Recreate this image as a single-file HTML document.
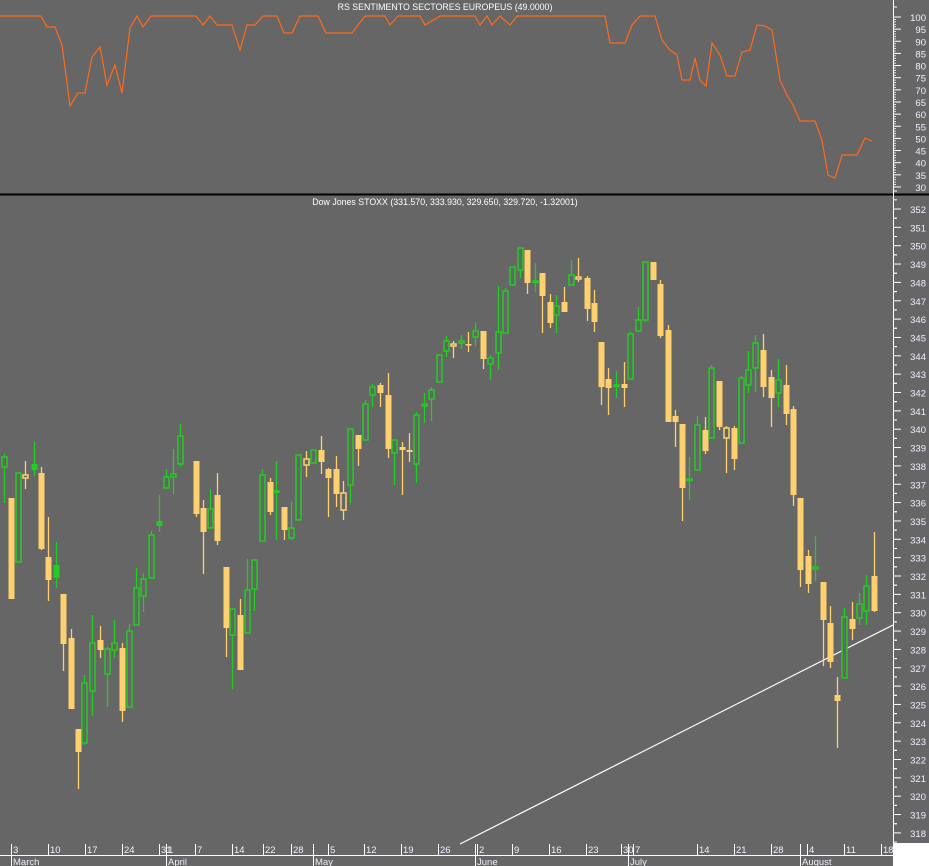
<!DOCTYPE html>
<html><head><meta charset="utf-8"><style>
html,body{margin:0;padding:0;background:#666;}
svg{display:block;font-family:"Liberation Sans",sans-serif;}
</style></head><body>
<svg id="s" width="929" height="866" xmlns="http://www.w3.org/2000/svg">
<rect width="929" height="866" fill="#666666"/>
<rect x="893" y="843" width="36" height="23" fill="#ffffff"/>
<line x1="0" y1="194.5" x2="929" y2="194.5" stroke="#000" stroke-width="2"/>
<line x1="893.5" y1="0" x2="893.5" y2="843" stroke="#fff" stroke-width="1"/>
<text x="445" y="10" font-size="8.8" fill="#fff" text-anchor="middle">RS SENTIMENTO SECTORES EUROPEUS (49.0000)</text>
<text x="445" y="205" font-size="8.8" fill="#fff" text-anchor="middle">Dow Jones STOXX (331.570, 333.930, 329.650, 329.720, -1.32001)</text>
<polyline fill="none" stroke="#ff6a1a" stroke-width="1.2" points="0,16 41,16 47,27 55,27 62,45 70,106 78,93 85,93 92,57 100,47 107,85 115,65 122,93 130,28 137,16 143,27 151,16 196,16 203,25 210,16 217,25 232,25 240,50 247,25 255,25 263,16 277,16 284,33 292,33 300,16 318,16 326,33 352,33 358,25 365,16 385,16 390,25 398,16 420,16 425,25 440,16 475,16 480,25 487,16 492,25 500,16 510,25 517,16 605,16 610,43 625,43 632,25 640,16 655,16 662,40 670,50 677,55 682,80 690,80 695,58 700,80 706,86 712,43 720,55 727,76 735,76 742,52 750,50 757,25 765,26 772,30 780,80 787,95 793,105 800,121 807,121 815,121 822,140 828,175 835,178 842,155 850,155 857,155 865,138 872,141"/>
<line x1="460" y1="844" x2="893" y2="625" stroke="#fff" stroke-width="1.2"/>
<g id="c"></g>
<g id="ax" font-size="9.5" fill="#eef0ff"></g>
<line x1="0" y1="855.5" x2="893" y2="855.5" stroke="#fff"/>
</svg>
<script>
var NS="http://www.w3.org/2000/svg";
function el(t,a,p){var e=document.createElementNS(NS,t);for(var k in a)e.setAttribute(k,a[k]);(p||document.getElementById('c')).appendChild(e);return e;}
var Y="#ffd070",G="#22cc22";
var d=[
[4,454,503,457,467,'G'],[11,498,599,498,599,'Y'],[18,473,562,473,562,'G'],[25,461,489,475,478,'y'],[34,442,476,464,470,'g'],
[41,467,550,473,549,'Y'],[48,517,601,557,580,'Y'],[56,542,588,565,578,'g'],[63,594,671,594,644,'Y'],[71,629,709,638,709,'Y'],
[78,729,789,729,752,'Y'],[84,675,745,683,743,'G'],[92,615,716,643,691,'G'],[100,626,658,640,650,'Y'],[107,647,707,649,674,'G'],
[114,620,658,643,650,'G'],[122,643,722,648,711,'Y'],[129,624,707,631,707,'G'],[136,568,625,588,625,'G'],[143,573,612,579,596,'G'],
[151,531,578,535,578,'G'],[159,495,532,521,526,'g'],[166,469,488,477,488,'G'],[173,449,494,474,477,'G'],[180,424,467,436,464,'G'],
[196,461,517,461,514,'Y'],[203,500,574,508,532,'Y'],[210,489,528,509,528,'G'],[217,473,545,495,541,'Y'],[226,567,657,567,628,'Y'],
[232,609,689,609,635,'G'],[240,599,670,615,670,'Y'],[247,559,633,590,633,'G'],[254,559,611,560,589,'G'],[262,469,541,475,541,'G'],
[270,478,515,482,512,'Y'],[276,461,540,491,492,'G'],[284,507,540,507,530,'Y'],[291,502,540,528,538,'G'],[298,455,520,455,520,'G'],
[306,451,477,459,465,'y'],[313,450,463,450,463,'G'],[321,436,474,450,462,'Y'],[328,468,517,469,478,'Y'],[336,456,507,469,494,'Y'],
[343,481,520,493,510,'y'],[350,429,503,429,485,'G'],[358,435,466,435,449,'Y'],[365,400,440,404,440,'G'],[372,384,407,387,395,'G'],
[380,383,407,385,393,'Y'],[388,373,458,395,449,'Y'],[394,440,485,440,453,'G'],[402,442,495,447,450,'Y'],[409,433,462,450,452,'Y'],
[416,412,483,415,464,'G'],[424,393,423,404,406,'G'],[431,387,421,390,399,'G'],[439,355,382,355,382,'G'],[446,336,357,341,351,'G'],
[453,341,358,344,346,'y'],[461,335,349,341,343,'G'],[468,332,352,344,345,'Y'],[475,322,346,331,337,'G'],[483,331,369,331,359,'Y'],
[490,355,380,358,364,'G'],[498,286,370,332,353,'G'],[505,288,333,291,333,'G'],[512,267,285,267,285,'G'],[520,248,278,248,270,'G'],
[527,250,294,250,283,'Y'],[535,263,292,281,282,'G'],[542,273,333,273,296,'Y'],[550,294,328,302,323,'Y'],[556,295,333,306,315,'G'],
[564,287,312,302,312,'Y'],[571,260,285,275,285,'G'],[578,258,282,277,279,'y'],[587,276,321,278,309,'Y'],[594,290,332,303,322,'Y'],
[601,342,405,342,387,'Y'],[608,368,415,379,388,'Y'],[616,371,398,385,386,'G'],[624,362,407,384,388,'Y'],[630,332,379,334,379,'G'],
[638,307,332,320,331,'G'],[645,262,322,262,320,'G'],[653,262,280,262,280,'Y'],[660,280,338,284,336,'Y'],[668,325,422,330,422,'Y'],
[675,410,447,416,422,'Y'],[682,424,521,424,488,'Y'],[689,457,500,479,480,'G'],[697,416,470,425,470,'G'],[705,417,454,430,451,'Y'],
[711,365,438,368,438,'G'],[719,381,430,381,427,'Y'],[726,426,473,428,438,'y'],[734,426,470,428,459,'Y'],[741,376,443,378,443,'G'],
[748,351,393,370,385,'G'],[755,335,392,343,368,'G'],[763,334,397,350,387,'Y'],[771,370,427,377,398,'Y'],[778,359,407,380,393,'G'],
[786,365,425,385,414,'Y'],[793,406,506,409,495,'Y'],[800,498,587,498,570,'Y'],[808,550,593,556,584,'Y'],[815,536,581,567,569,'G'],
[823,582,666,582,620,'Y'],[830,606,668,623,662,'Y'],[837,677,748,695,701,'Y'],[844,608,678,617,678,'G'],[852,602,640,619,629,'Y'],
[859,593,625,604,618,'G'],[866,575,625,586,611,'G'],[874,532,612,576,611,'Y']];
d.forEach(function(c){var col=(c[5]=='Y'||c[5]=='y')?Y:G;var x=c[0];
el('line',{x1:x+.5,y1:c[1],x2:x+.5,y2:c[2],stroke:col,'stroke-width':1.3});
var h=Math.max(c[4]-c[3],1.5);
if(c[5]=='Y'||c[5]=='g')el('rect',{x:x-2.5,y:c[3],width:6,height:h,fill:col});
else el('rect',{x:x-2,y:c[3],width:5,height:h,fill:'#666',stroke:col,'stroke-width':1.5});});
var ax=document.getElementById('ax');
for(var v=100;v>=30;v-=5){var y=17+(100-v)/5*12.14;el('line',{x1:893,y1:y,x2:901,y2:y,stroke:'#fff'},ax);
if(v>30){for(var k=1;k<5;k++)el('line',{x1:893,y1:y+k*2.43,x2:896,y2:y+k*2.43,stroke:'#fff','stroke-width':0.8},ax);}
var t=el('text',{x:926,y:y+4,'text-anchor':'end'},ax);t.textContent=v;}
el('line',{x1:893,y1:7,x2:897,y2:7,stroke:'#fff'},ax);el('line',{x1:893,y1:191,x2:897,y2:191,stroke:'#fff'},ax);
for(var p=352;p>=318;p--){var y=209+(352-p)*18.35;el('line',{x1:893,y1:y,x2:901,y2:y,stroke:'#fff'},ax);
el('line',{x1:893,y1:y+9.17,x2:897,y2:y+9.17,stroke:'#fff'},ax);el('line',{x1:893,y1:y-9.17,x2:897,y2:y-9.17,stroke:'#fff'},ax);
var t=el('text',{x:926,y:y+4,'text-anchor':'end'},ax);t.textContent=p;}
var days=[[11,'3'],[48,'10'],[85,'17'],[122,'24'],[159,'31'],[166,'1'],[195,'7'],[232,'14'],[263,'22'],[291,'28'],[328,'5'],[364,'12'],[401,'19'],[438,'26'],[477,'2'],[512,'9'],[549,'16'],[586,'23'],[621,'30'],[633,'7'],[697,'14'],[734,'21'],[771,'28'],[807,'4'],[844,'11'],[881,'18']];
days.forEach(function(q){el('line',{x1:q[0]+.5,y1:844,x2:q[0]+.5,y2:855,stroke:'#fff'},ax);var t=el('text',{x:q[0]+2,y:853},ax);t.textContent=q[1];});
var mons=[[11,'March'],[166,'April'],[313,'May'],[475,'June'],[628,'July'],[800,'August']];
mons.forEach(function(q){el('line',{x1:q[0]+.5,y1:844,x2:q[0]+.5,y2:866,stroke:'#fff'},ax);var t=el('text',{x:q[0]+2,y:865},ax);t.textContent=q[1];});
</script>
</body></html>
